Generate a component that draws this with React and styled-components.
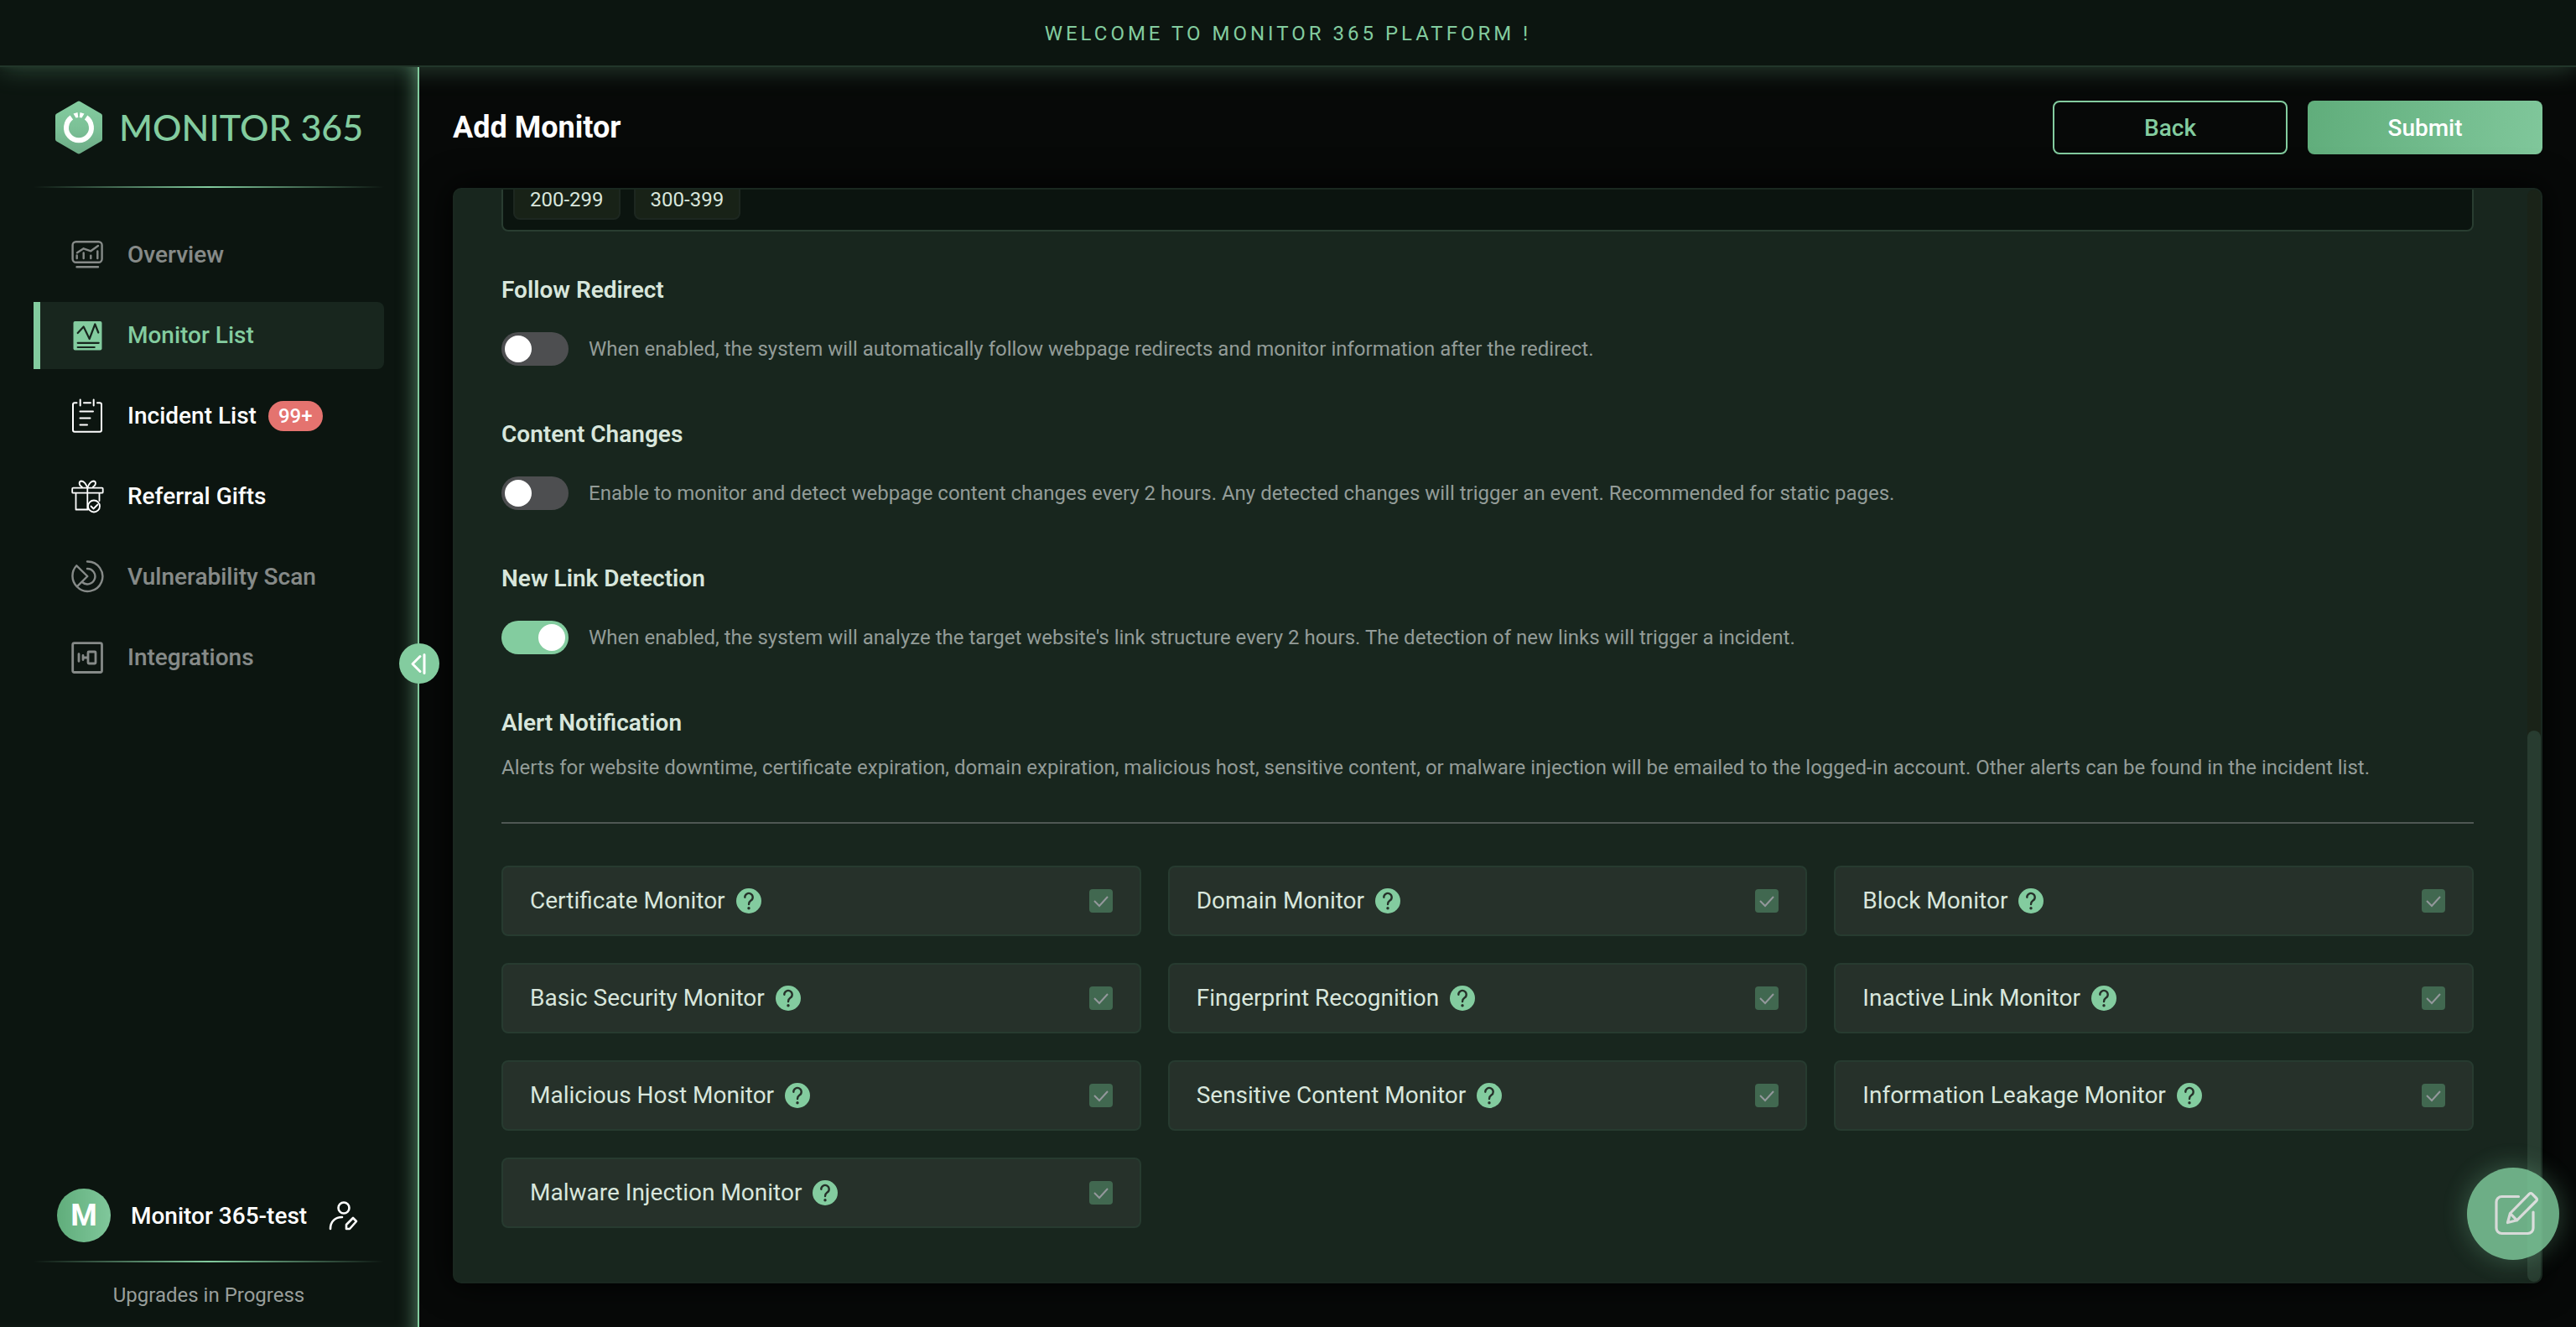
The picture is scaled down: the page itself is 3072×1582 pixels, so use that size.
import React from 'react';
import styled, { createGlobalStyle } from 'styled-components';

const green = '#83cc9f';

const Global = createGlobalStyle`
  * { box-sizing: border-box; }
  body { margin: 0; background: #070908; font-family: Roboto, "Liberation Sans", sans-serif; color: #fff; }
  button, input { font-family: inherit; }
  h1, h2, p { margin: 0; }
`;

const Page = styled.div`
  height: 100vh;
  display: flex;
  flex-direction: column;
`;

const Banner = styled.header`
  flex: none;
  height: 80px;
  display: flex;
  align-items: center;
  justify-content: center;
  padding-top: 2px;
  background: #0c1510;
  border-bottom: 2px solid #22362a;
  box-shadow: 0 0 32px rgba(131, 204, 159, 0.32);
  color: ${green};
  font-size: 24px;
  line-height: 32px;
  letter-spacing: 4px;
  position: relative;
  z-index: 2;
`;

const Body = styled.div`
  flex: 1;
  min-height: 0;
  display: flex;
`;

const Sidebar = styled.aside`
  flex: none;
  width: 500px;
  display: flex;
  flex-direction: column;
  padding: 40px 40px 22px;
  background: #0c1510;
  border-right: 2px solid ${green};
  box-shadow: inset -20px 0 20px -16px rgba(131, 204, 159, 0.5);
`;

const Brand = styled.a`
  display: flex;
  align-items: center;
  gap: 20px;
  height: 64px;
  padding-left: 26px;
  color: ${green};
  text-decoration: none;
  font: 500 43px/64px Lato, sans-serif;
`;

const Rule = styled.div`
  flex: none;
  height: 2px;
  background: linear-gradient(90deg, transparent, ${green}, transparent);
`;

const BrandRule = styled(Rule)`
  margin: 38px 0 40px;
`;

const Nav = styled.nav`
  flex: 1;
  display: flex;
  flex-direction: column;
  gap: 16px;
`;

const NavItem = styled.a`
  display: flex;
  align-items: center;
  height: 80px;
  padding-left: 36px;
  border-left: 8px solid ${(p) => (p.$active ? green : 'transparent')};
  border-radius: 0 8px 8px 0;
  background: ${(p) => (p.$active ? '#18261e' : 'transparent')};
  color: ${(p) => (p.$active ? green : '#fff')};
  opacity: ${(p) => (p.$muted ? 0.5 : 1)};
  font-size: 28px;
  line-height: 32px;
  font-weight: 500;
  text-decoration: none;
  svg { margin-right: 28px; }
`;

const Badge = styled.span`
  height: 36px;
  margin-left: 14px;
  padding: 0 12px;
  border-radius: 18px;
  background: #e4736f;
  color: #fff;
  font-size: 24px;
  line-height: 36px;
`;

const Account = styled.div`
  display: flex;
  align-items: center;
  height: 64px;
  margin-bottom: 22px;
  padding: 0 28px;
  font-size: 28px;
  font-weight: 500;
`;

const Avatar = styled.span`
  width: 64px;
  height: 64px;
  margin-right: 24px;
  border-radius: 50%;
  background: linear-gradient(90deg, #60ad7b, #80c79b);
  font-size: 36px;
  font-weight: 700;
  line-height: 64px;
  text-align: center;
`;

const IconButton = styled.button`
  display: flex;
  margin-left: auto;
  padding: 0;
  border: 0;
  background: none;
  color: #fff;
`;

const Version = styled.p`
  margin-top: 23px;
  color: #989e9b;
  font-size: 24px;
  line-height: 32px;
  text-align: center;
`;

const Collapse = styled.button`
  position: fixed;
  z-index: 3;
  left: 476px;
  top: calc(50% - 24px);
  width: 48px;
  height: 48px;
  padding: 0;
  border: 0;
  border-radius: 50%;
  background: ${green};
  color: #fff;
  display: flex;
`;

const Main = styled.main`
  flex: 1;
  min-width: 0;
  display: flex;
  flex-direction: column;
  padding: 40px 40px 52px;
`;

const Heading = styled.div`
  flex: none;
  display: flex;
  align-items: center;
  gap: 24px;
  height: 64px;
  margin-bottom: 40px;
`;

const Title = styled.h1`
  flex: 1;
  font-size: 36px;
  line-height: 48px;
  font-weight: 700;
`;

const Button = styled.button`
  width: 280px;
  height: 64px;
  border: ${(p) => (p.$primary ? '0' : `2px solid ${green}`)};
  border-radius: 8px;
  background: ${(p) => (p.$primary ? 'linear-gradient(100deg, #60ad7b, #80c79b)' : 'transparent')};
  color: ${(p) => (p.$primary ? '#fff' : green)};
  font-size: 28px;
  font-weight: 500;
`;

const Panel = styled.section`
  flex: 1;
  min-height: 0;
  display: flex;
  border: 2px solid #1a2820;
  border-radius: 10px;
  background: #18261e;
  box-shadow: 0 0 40px #000;
`;

const Content = styled.form`
  flex: 1;
  min-width: 0;
  display: flex;
  flex-direction: column;
  justify-content: flex-end;
  overflow: hidden;
  padding: 0 64px 64px 56px;
  > * { flex: none; }
`;

const ScrollTrack = styled.div`
  width: 16px;
  display: flex;
  align-items: flex-end;
  border-radius: 8px;
  background: #1a2318;
`;

const ScrollThumb = styled.div`
  width: 100%;
  height: 50.5%;
  border-radius: 8px;
  background: #283c30;
`;

const TagBox = styled.div`
  display: flex;
  gap: 16px;
  margin-bottom: 54px;
  padding: 12px;
  border: 2px solid #293d31;
  border-radius: 8px;
  background: #0b140f;
`;

const Tag = styled.span`
  padding: 10px 18px;
  border: 2px solid #1d2720;
  border-radius: 8px;
  background: #182217;
  color: #d8e6dc;
  font-size: 24px;
  line-height: 24px;
`;

const Setting = styled.div`
  margin-bottom: 66px;
`;

const SectionTitle = styled.h2`
  color: #d8e6dc;
  font-size: 28px;
  line-height: 32px;
  font-weight: 600;
`;

const SwitchRow = styled.label`
  display: flex;
  align-items: center;
  gap: 24px;
  margin-top: 34px;
  color: #939c98;
  font-size: 24px;
  line-height: 32px;
`;

const Switch = styled.input`
  appearance: none;
  flex: none;
  display: flex;
  width: 80px;
  height: 40px;
  margin: 0;
  padding: 4px;
  border-radius: 20px;
  background: #4d4e50;
  &::before {
    content: '';
    width: 32px;
    height: 32px;
    border-radius: 50%;
    background: #fff;
  }
  &:checked { background: ${green}; justify-content: flex-end; }
`;

const Hint = styled.p`
  margin: 21px 0 49px;
  color: #939c98;
  font-size: 24px;
  line-height: 32px;
`;

const Divider = styled.hr`
  width: 100%;
  height: 2px;
  margin: 0 0 50px;
  border: 0;
  background: #4f5754;
`;

const Grid = styled.div`
  display: grid;
  grid-template-columns: repeat(3, 1fr);
  gap: 32px;
`;

const Card = styled.label`
  display: flex;
  align-items: center;
  height: 84px;
  padding: 0 32px;
  border: 2px solid #273b30;
  border-radius: 8px;
  background: #26312a;
  color: #d8e6dc;
  font-size: 28px;
  line-height: 32px;
  > svg { margin-left: 13px; }
`;

const CheckWrap = styled.span`
  display: grid;
  margin-left: auto;
  > * { grid-area: 1 / 1; }
  svg { pointer-events: none; }
`;

const Checkbox = styled.input`
  appearance: none;
  width: 28px;
  height: 28px;
  margin: 0;
  border-radius: 4px;
  background: #416850;
`;

const Feedback = styled.button`
  position: fixed;
  z-index: 3;
  right: 20px;
  bottom: 80px;
  width: 110px;
  height: 110px;
  padding: 0;
  border: 0;
  border-radius: 50%;
  background: #7fcb9c;
  box-shadow: 0 0 32px rgba(131, 204, 159, 0.4);
  color: #fff;
  opacity: 0.83;
`;

const Stroke = ({ w = 2, children }) => (
  <svg width="40" height="40" viewBox="0 0 40 40" fill="none" stroke="currentColor" strokeWidth={w} strokeLinecap="round" strokeLinejoin="round" overflow="visible" aria-hidden="true">
    {children}
  </svg>
);

const OverviewIcon = () => (
  <Stroke w={2.4}>
    <rect x="2.600" y="4.300" width="35" height="24.500" rx="4" />
    <path d="M8 17.300l7.700-5 8.600 3 8.700-6.300M7.700 20.500v3.500M15.700 17.500v6.500M24.300 20.700v3.300M32.300 15.500v8.500M7.500 34.200h25.500" />
  </Stroke>
);

const ListIcon = () => (
  <Stroke w={2.2}>
    <rect x="3.500" y="3" width="34" height="34.500" rx="2" fill="currentColor" stroke="none" />
    <path stroke="#18261e" d="M8.700 17l7-7.500 7 14.500 6.600-17.500 4 10M8.700 28.800h25M8.700 34h20" />
  </Stroke>
);

const IncidentIcon = () => (
  <Stroke>
    <path d="M7.500 4.300H5a2 2 0 0 0-2 2v30.400a2 2 0 0 0 2 2h30a2 2 0 0 0 2-2V6.300a2 2 0 0 0-2-2h-3M16 4.300h8M11.700 0.500v7M27.700 0.500v7M11.500 14.500h15.500M11.500 22.500h12M11.500 30.500h8.500" />
  </Stroke>
);

const GiftIcon = () => (
  <Stroke w={1.8}>
    <rect x="2.200" y="9.700" width="36.500" height="6" rx="1" />
    <path d="M20.300 9.700v26M6.500 16v19.500h14.500M34.500 16v9M20.300 9.500c-1.500-4-4-8-7.500-8-3 .5-3 5 1 7M20.300 9.500c1.500-4 4-8 7.500-8 3 .5 3 5-1 7" />
    <circle cx="28" cy="31.500" r="7" fill="#0c1510" />
    <path d="M24.500 31.500l3 3 5-5" />
  </Stroke>
);

const ScanIcon = () => (
  <Stroke w={2.4}>
    <path d="M20 1.500a17.700 17.700 0 1 1-12.300 29.800L20.300 19 7.300 6.300a18 18 0 0 0 .4 25M20 10a9.200 9.200 0 1 1-6 16" />
  </Stroke>
);

const IntegrationIcon = () => (
  <Stroke w={2.8}>
    <rect x="2.700" y="2.700" width="34.800" height="34.800" rx="2" />
    <path d="M10 15.700v8.600M15 17.500v5M15 20h5" />
    <rect x="21" y="13" width="9" height="14" rx="1" />
  </Stroke>
);

const Logo = () => (
  <svg width="56" height="64" viewBox="0 0 56 64" aria-hidden="true">
    <defs>
      <linearGradient id="hex" gradientUnits="userSpaceOnUse" x1="0" y1="0" x2="0" y2="64">
        <stop offset="0" stopColor="#83cc9f" />
        <stop offset="0.500" stopColor="#7cc197" />
        <stop offset="1" stopColor="#6caa85" />
      </linearGradient>
    </defs>
    <path fill="url(#hex)" stroke="url(#hex)" strokeWidth="6" strokeLinejoin="round" d="M28 3.500L53 18v28L28 60.500 3 46V18z" />
    <path fill="none" stroke="#fff" strokeWidth="6" d="M19.400 20a15 15 0 1 0 17.200 0" />
    <path fill="#fff" d="M21.500 15.500l5-1.500.8 6-2.800.5zM34.500 15.500l-5-1.500-.8 6 2.800.5z" />
  </svg>
);

const HelpIcon = () => (
  <svg width="30" height="30" viewBox="0 0 30 30" aria-hidden="true">
    <circle cx="15" cy="15" r="15" fill={green} />
    <path d="M10.300 10.800a4.700 4.700 0 1 1 7.200 3.800c-1.700 1.200-2.500 2-2.500 4.400" fill="none" stroke="#26312a" strokeWidth="2.400" strokeLinecap="round" />
    <circle cx="15" cy="23.800" r="1.700" fill="#26312a" />
  </svg>
);

const navItems = [
  { label: 'Overview', Icon: OverviewIcon, muted: true },
  { label: 'Monitor List', Icon: ListIcon, active: true },
  { label: 'Incident List', Icon: IncidentIcon, badge: '99+' },
  { label: 'Referral Gifts', Icon: GiftIcon },
  { label: 'Vulnerability Scan', Icon: ScanIcon, muted: true },
  { label: 'Integrations', Icon: IntegrationIcon, muted: true },
];

const settings = [
  { title: 'Follow Redirect', text: 'When enabled, the system will automatically follow webpage redirects and monitor information after the redirect.', on: false },
  { title: 'Content Changes', text: 'Enable to monitor and detect webpage content changes every 2 hours. Any detected changes will trigger an event. Recommended for static pages.', on: false },
  { title: 'New Link Detection', text: "When enabled, the system will analyze the target website's link structure every 2 hours. The detection of new links will trigger a incident.", on: true },
];

const alerts = [
  'Certificate Monitor', 'Domain Monitor', 'Block Monitor',
  'Basic Security Monitor', 'Fingerprint Recognition', 'Inactive Link Monitor',
  'Malicious Host Monitor', 'Sensitive Content Monitor', 'Information Leakage Monitor',
  'Malware Injection Monitor',
];

export default function App() {
  return (
    <Page>
      <Global />
      <Banner>WELCOME TO MONITOR 365 PLATFORM !</Banner>
      <Body>
        <Sidebar>
          <Brand href="#"><Logo />MONITOR 365</Brand>
          <BrandRule />
          <Nav>
            {navItems.map(({ label, Icon, active, muted, badge }) => (
              <NavItem key={label} href="#" $active={active} $muted={muted}>
                <Icon />
                {label}
                {badge && <Badge>{badge}</Badge>}
              </NavItem>
            ))}
          </Nav>
          <Account>
            <Avatar>M</Avatar>
            Monitor 365-test
            <IconButton type="button" aria-label="Edit profile">
              <Stroke w={2.6}>
                <circle cx="20" cy="11" r="6.500" />
                <path d="M4 36c0-9 6-14 14-14M23 36v-5l8-8 4 4-8 9z" />
              </Stroke>
            </IconButton>
          </Account>
          <Rule />
          <Version>Upgrades in Progress</Version>
        </Sidebar>
        <Main>
          <Heading>
            <Title>Add Monitor</Title>
            <Button type="button">Back</Button>
            <Button type="submit" form="monitor" $primary>Submit</Button>
          </Heading>
          <Panel>
            <Content id="monitor">
              <TagBox>
                <Tag>200-299</Tag>
                <Tag>300-399</Tag>
              </TagBox>
              {settings.map((s) => (
                <Setting key={s.title}>
                  <SectionTitle>{s.title}</SectionTitle>
                  <SwitchRow>
                    <Switch type="checkbox" role="switch" defaultChecked={s.on} />
                    {s.text}
                  </SwitchRow>
                </Setting>
              ))}
              <SectionTitle>Alert Notification</SectionTitle>
              <Hint>
                Alerts for website downtime, certificate expiration, domain expiration, malicious host, sensitive content, or malware injection will be emailed to the logged-in account. Other alerts can be found in the incident list.
              </Hint>
              <Divider />
              <Grid>
                {alerts.map((name) => (
                  <Card key={name}>
                    {name}
                    <HelpIcon />
                    <CheckWrap>
                      <Checkbox type="checkbox" defaultChecked disabled />
                      <svg width="28" height="28" viewBox="0 0 28 28" fill="none" stroke="#94989c" strokeWidth="2" aria-hidden="true">
                        <path d="M6 14l6 6 10-11" />
                      </svg>
                    </CheckWrap>
                  </Card>
                ))}
              </Grid>
            </Content>
            <ScrollTrack><ScrollThumb /></ScrollTrack>
          </Panel>
        </Main>
      </Body>
      <Collapse type="button" aria-label="Collapse sidebar">
        <svg width="48" height="48" viewBox="0 0 48 48" fill="none" stroke="#fff" strokeWidth="3" strokeLinecap="round" strokeLinejoin="round" aria-hidden="true">
          <path d="M25 15.500l-9 9 9 9M30 13.500v22" />
        </svg>
      </Collapse>
      <Feedback type="button" aria-label="Feedback">
        <svg width="110" height="110" viewBox="0 0 110 110" fill="none" stroke="currentColor" strokeWidth="3.200" strokeLinecap="round" strokeLinejoin="round" aria-hidden="true">
          <path d="M61.500 34.500H41.500a6.500 6.500 0 0 0-6.500 6.500v31a6.500 6.500 0 0 0 6.500 6.500h31a6.500 6.500 0 0 0 6.500-6.500V53" />
          <path d="M48.500 65.500L51.500 54.500 74.500 31.200a2 2 0 0 1 3 0l5.300 5.300a2 2 0 0 1 0 3L59.500 62.800zM51.500 54.500l8 8.300" />
        </svg>
      </Feedback>
    </Page>
  );
}
